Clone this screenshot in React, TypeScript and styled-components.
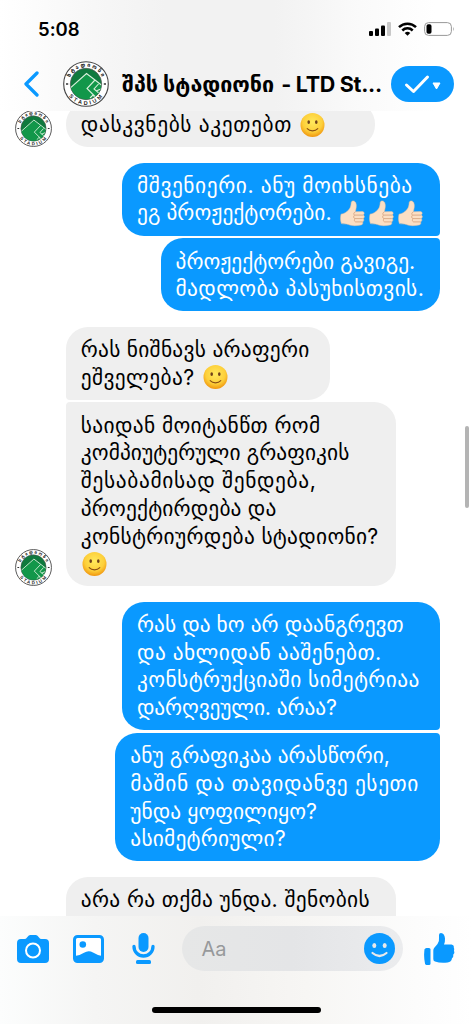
import React, { useLayoutEffect, useRef, useState } from "react";
import styled, { createGlobalStyle } from "styled-components";

const GlobalStyle = createGlobalStyle`
  * { box-sizing: border-box; }
  body { margin: 0; background: #fff; }
`;

const BLUE = "#0a99ff";

const Screen = styled.div`
  position: relative;
  width: 473px;
  height: 1024px;
  display: flex;
  flex-direction: column;
  overflow: hidden;
  background: #fff;
  font-family: "Inter", "DejaVu Sans", sans-serif;
`;

const Header = styled.header`
  flex: 0 0 111px;
  background: linear-gradient(90deg, #fff 0%, #f8f8f8 17%, #f2f2f2 35%, #f2f2f2 58%, #fafafa 76%, #fff 92%);
`;

const StatusBar = styled.div`
  height: 56px;
  padding: 19px 18px 0 38px;
  display: flex;
  align-items: flex-start;
  justify-content: space-between;
`;

const Clock = styled.div`
  font-size: 18.5px;
  line-height: 20px;
  font-weight: 600;
`;

const StatusIcons = styled.div`
  display: flex;
  gap: 7px;
  padding-top: 3px;
`;

const NavBar = styled.div`
  height: 55px;
  display: flex;
  align-items: center;
  padding: 0 19px 0 24px;
`;

const BackIcon = styled.svg`
  margin-right: 24px;
  flex: none;
`;

const Title = styled.h1`
  margin: 0 0 0 13px;
  flex: 1;
  display: flex;
  gap: 7px;
  font-size: 21.5px;
  line-height: 28px;
  font-weight: 700;
`;

const TitleLatin = styled.span`
  font-weight: 650;
`;

const Confirm = styled.button`
  width: 63px;
  height: 36px;
  border: 0;
  border-radius: 18px;
  padding: 0;
  background: ${BLUE};
  display: flex;
`;

const Thread = styled.main`
  flex: 1;
  overflow: hidden;
  display: flex;
  flex-direction: column;
`;

const Group = styled.section<{ $own?: boolean; $top: number }>`
  flex: none;
  margin-top: ${(p) => p.$top}px;
  padding-left: ${(p) => (p.$own ? 0 : 14.5)}px;
  padding-right: ${(p) => (p.$own ? 33 : 0)}px;
  display: flex;
  align-items: flex-end;
  justify-content: ${(p) => (p.$own ? "flex-end" : "flex-start")};
`;

const AvatarSlot = styled.div`
  flex: 0 0 51.3px;
  height: 37px;
`;

const Stack = styled.div<{ $own?: boolean }>`
  display: flex;
  flex-direction: column;
  gap: 2.8px;
  align-items: ${(p) => (p.$own ? "flex-end" : "flex-start")};
`;

const Bubble = styled.div<{ $own?: boolean; $w: number; $pos?: "first" | "last" }>`
  width: ${(p) => p.$w}px;
  padding: 9.2px 15px 8.3px;
  color: ${(p) => (p.$own ? "#fff" : "#000")};
  background: ${(p) => (p.$own ? BLUE : "#efefef")};
  border-radius: ${(p) => {
    const top = p.$pos === "last" ? 4 : 22;
    const bottom = p.$pos === "first" ? 4 : 22;
    return p.$own ? `22px ${top}px ${bottom}px 22px` : `${top}px 22px 22px ${bottom}px`;
  }};
`;

const Row = styled.div`
  height: 27.76px;
  display: flex;
  align-items: center;
  font-size: 21.4px;
  line-height: 27.76px;
`;

const Emojis = styled.span<{ $alone?: boolean }>`
  display: flex;
  gap: 4px;
  margin-left: ${(p) => (p.$alone ? 1.5 : 8)}px;
`;

const Run = styled.span`
  display: inline-block;
  white-space: pre;
`;

/* Tracks a run of text so that it spans the given width. */
function Fit({ text, w }: { text: string; w: number }) {
  const ref = useRef<HTMLSpanElement>(null);
  const [spacing, setSpacing] = useState(0);
  useLayoutEffect(() => {
    const el = ref.current!;
    el.style.letterSpacing = "0px";
    setSpacing((w + 0.7 - el.getBoundingClientRect().width) / text.length);
  }, [text, w]);
  return <Run ref={ref} style={{ letterSpacing: `${spacing}px` }}>{text}</Run>;
}

const Smile = () => (
  <svg width="25" height="25" viewBox="0 0 25 25" role="img" aria-label="smile">
    <defs>
      <radialGradient id="face" cx="50%" cy="38%" r="62%">
        <stop offset="0" stopColor="#ffe95c" />
        <stop offset=".65" stopColor="#fdcf3a" />
        <stop offset="1" stopColor="#f0960f" />
      </radialGradient>
    </defs>
    <circle cx="12.5" cy="12" r="12" fill="url(#face)" />
    <ellipse cx="8.7" cy="9.1" rx="1.3" ry="1.9" fill="#70421a" />
    <ellipse cx="16.3" cy="9.1" rx="1.3" ry="1.9" fill="#70421a" />
    <path d="M7.2 15.6c2.6 3 8 3 10.6 0" fill="none" stroke="#8a4f14" strokeWidth="1.1" strokeLinecap="round" />
  </svg>
);

const Thumb = () => (
  <svg width="25" height="27" viewBox="0 0 25 27" role="img" aria-label="thumbs up">
    <path d="M1 14.200C4 13.800 6.800 12 9 9.500C10.800 7.300 11 5 11.200 2.600C11.400.3 14.800.3 15.800 2.800C17 5.800 16 9 15.300 11.800L22.500 11.600C24.600 11.700 24.700 14.500 23 15C24.900 15.500 24.800 18.100 23 18.500C24.400 19.100 24.100 21.500 22.400 21.900C23.400 22.900 22.600 24.700 21 25C16.500 25.900 11.500 26 8.500 24.600C6 23.600 3 24.200 1.400 23.600C.3 20.500.3 17.300 1 14.200Z" fill="#fbdfc4" stroke="#eac19c" strokeWidth=".5" />
    <path d="M15.300 12c-1.600.5-2 2.200-.8 3.100h8.500M14.500 15.200c-1.300 1-1 2.800.3 3.400h8M15 18.700c-1 1-.8 2.700.6 3.200h6.800" fill="none" stroke="#d3a07b" strokeWidth=".8" />
  </svg>
);

const Crest = ({ size }: { size: number }) => (
  <svg width={size} height={size} viewBox="0 0 46 46" role="img" aria-label="stadium crest">
    <defs>
      <path id="arcTop" d="M5.700 23a17.300 17.300 0 0 1 34.600 0" />
      <path id="arcBottom" d="M2.200 23a20.800 20.800 0 0 0 41.600 0" />
      <clipPath id="disc"><circle cx="23" cy="23" r="15.300" /></clipPath>
    </defs>
    <circle cx="23" cy="23" r="22.300" fill="#fff" stroke="#444" strokeWidth="1.100" />
    <circle cx="23" cy="23" r="15.700" fill="#0f7a3e" stroke="#555" strokeWidth=".7" />
    <g clipPath="url(#disc)">
      <path d="M5 29L23.500 12.500 38 24v18H8z" fill="#12974a" />
      <path d="M5 29L23.500 12.500l8.500 6.500M32 19l-8 8.500 8 8M32 19l7 5.500M35.500 23l-4.500 5 6 5M33 30l5-2M27 37l3-3 4 5" fill="none" stroke="#d9f0dc" strokeWidth="1.100" />
    </g>
    <text fontFamily="DejaVu Sans" fontSize="5.500" fontWeight="700" fill="#222" letterSpacing="1.700"><textPath href="#arcTop" startOffset="51%" textAnchor="middle">სტადიონი</textPath></text>
    <text fontFamily="Liberation Sans" fontSize="5.500" fontWeight="700" fill="#222" letterSpacing="2.300"><textPath href="#arcBottom" startOffset="51%" textAnchor="middle">STADIUM</textPath></text>
    <path d="M3 23h2.200M40.800 23h2.200" stroke="#333" strokeWidth="1.500" />
  </svg>
);

const Composer = styled.footer`
  flex: 0 0 108.5px;
  display: flex;
  flex-direction: column;
  align-items: center;
  background: linear-gradient(90deg, #fcfdfd 0%, #f5f5f4 20%, #f1f0ee 42%, #f7f6f4 65%, #fcfcfc 88%, #fff 100%);
`;

const Tools = styled.div`
  align-self: stretch;
  height: 66px;
  padding: 0 17px;
  display: flex;
  align-items: center;
`;

const ToolIcon = styled.svg<{ $gap: number }>`
  flex: none;
  margin-right: ${(p) => p.$gap}px;
`;

const Input = styled.div`
  width: 221px;
  height: 45px;
  margin-right: 21.5px;
  padding: 0 8px 0 20px;
  border-radius: 23px;
  background: linear-gradient(90deg, #e6e7e7, #e4e5e7 50%, #ebecee);
  color: #97999b;
  font-size: 20px;
  display: flex;
  align-items: center;
  justify-content: space-between;
`;

const HomeIndicator = styled.div`
  width: 169px;
  height: 6px;
  margin-top: 25.5px;
  border-radius: 3px;
  background: #000;
`;

const ScrollThumb = styled.div`
  position: absolute;
  right: 4px;
  top: 426px;
  width: 4px;
  height: 82px;
  border-radius: 2px;
  background: #b4b4b4;
`;

type Line = { t?: string; w?: number; emoji?: React.ReactNode };

const Message = ({ lines, ...rest }: { lines: Line[]; $w: number; $own?: boolean; $pos?: "first" | "last" }) => (
  <Bubble {...rest}>
    {lines.map((l, i) => (
      <Row key={i}>
        {l.t && <Fit text={l.t} w={l.w!} />}
        {l.emoji && <Emojis $alone={!l.t}>{l.emoji}</Emojis>}
      </Row>
    ))}
  </Bubble>
);

export default function App() {
  return (
    <Screen>
      <GlobalStyle />
      <Header>
        <StatusBar>
          <Clock><Fit text="5:08" w={41} /></Clock>
          <StatusIcons>
            <svg width="22" height="14" viewBox="0 0 22 14">
              <rect x="0" y="9" width="4" height="5" rx="1" />
              <rect x="6" y="6.5" width="4" height="7.5" rx="1" />
              <rect x="12" y="3.5" width="4" height="10.5" rx="1" />
              <rect x="18" y="0" width="4" height="14" rx="1" fill="#c8c8c8" />
            </svg>
            <svg width="19" height="14" viewBox="0 0 19 14" fill="none" stroke="#000" strokeWidth="2.5">
              <path d="M1 5.1a12.200 12.200 0 0 1 17 0M4.300 8.500a7.400 7.400 0 0 1 10.400 0" />
              <path d="M6.700 10.900a4.200 4.200 0 0 1 5.600 0L9.500 13.700z" fill="#000" stroke="none" />
            </svg>
            <svg width="31" height="14" viewBox="0 0 31 14">
              <rect x=".6" y=".6" width="26.800" height="12.800" rx="4" fill="none" stroke="#999" />
              <rect x="2.500" y="2.300" width="5" height="9.400" rx="1.800" />
              <path d="M29 4.800q1.500 2.200 0 4.400z" fill="#999" />
            </svg>
          </StatusIcons>
        </StatusBar>
        <NavBar>
          <BackIcon width="15" height="26" viewBox="0 0 15 26" fill="none" stroke={BLUE} strokeWidth="3.300" strokeLinecap="round" strokeLinejoin="round"><path d="M13 2L2 13l11 11" /></BackIcon>
          <Crest size={46} />
          <Title><Fit text="შპს სტადიონი" w={151.5} /><TitleLatin><Fit text="- LTD St..." w={100} /></TitleLatin></Title>
          <Confirm aria-label="confirm">
            <svg width="63" height="36" viewBox="0 0 63 36"><path d="M15.500 19l7 6.500L36.500 11" fill="none" stroke="#fff" strokeWidth="3" strokeLinecap="round" strokeLinejoin="round" /><path d="M42 17h7l-3.500 6z" fill="#fff" stroke="#fff" strokeLinejoin="round" /></svg>
          </Confirm>
        </NavBar>
      </Header>
      <Thread>
        <Group $top={-9}>
          <AvatarSlot><Crest size={37} /></AvatarSlot>
          <Message $w={309.5} lines={[{ t: "დასკვნებს აკეთებთ", w: 210.5, emoji: <Smile /> }]} />
        </Group>
        <Group $own $top={15.3}>
          <Stack $own>
            <Message $own $pos="first" $w={318} lines={[{ t: "მშვენიერი. ანუ მოიხსნება", w: 275 }, { t: "ეგ პროჟექტორები.", w: 194, emoji: <><Thumb /><Thumb /><Thumb /></> }]} />
            <Message $own $pos="last" $w={279.5} lines={[{ t: "პროჟექტორები გავიგე.", w: 239 }, { t: "მადლობა პასუხისთვის.", w: 248 }]} />
          </Stack>
        </Group>
        <Group $top={15.3}>
          <AvatarSlot><Crest size={37} /></AvatarSlot>
          <Stack>
            <Message $pos="first" $w={264} lines={[{ t: "რას ნიშნავს არაფერი", w: 228 }, { t: "ეშველება?", w: 113, emoji: <Smile /> }]} />
            <Message $pos="last" $w={330.7} lines={[
              { t: "საიდან მოიტანწთ რომ", w: 239 },
              { t: "კომპიუტერული გრაფიკის", w: 268 },
              { t: "შესაბამისად შენდება,", w: 235 },
              { t: "პროექტირდება და", w: 195 },
              { t: "კონსტრიურდება სტადიონი?", w: 297 },
              { emoji: <Smile /> },
            ]} />
          </Stack>
        </Group>
        <Group $own $top={15.3}>
          <Stack $own>
            <Message $own $pos="first" $w={318} lines={[
              { t: "რას და ხო არ დაანგრევთ", w: 266 },
              { t: "და ახლიდან ააშენებთ.", w: 244 },
              { t: "კონსტრუქციაში სიმეტრიაა", w: 282 },
              { t: "დარღვეული. არაა?", w: 199 },
            ]} />
            <Message $own $pos="last" $w={324.7} lines={[
              { t: "ანუ გრაფიკაა არასწორი,", w: 259 },
              { t: "მაშინ და თავიდანვე ესეთი", w: 288 },
              { t: "უნდა ყოფილიყო?", w: 186 },
              { t: "ასიმეტრიული?", w: 155 },
            ]} />
          </Stack>
        </Group>
        <Group $top={15.3}>
          <AvatarSlot />
          <Message $w={330.7} lines={[{ t: "არა რა თქმა უნდა. შენობის", w: 288.5 }, {}]} />
        </Group>
      </Thread>
      <Composer>
        <Tools>
          <ToolIcon $gap={24} width="32" height="28" viewBox="0 0 32 28"><path d="M4 4h3.500q1.500 0 2.500-1.500Q11.500 0 13 0h6q1.500 0 3 2.500Q23 4 24.500 4H28q4 0 4 4v16q0 4-4 4H4q-4 0-4-4V8q0-4 4-4z" fill={BLUE} /><circle cx="16" cy="15.500" r="7" fill="none" stroke="#fff" strokeWidth="2" /></ToolIcon>
          <ToolIcon $gap={28} width="31" height="28" viewBox="0 0 31 28"><rect x="1.500" y="1.500" width="28" height="25" rx="3" fill="#fff" stroke={BLUE} strokeWidth="3" /><circle cx="9.800" cy="9.500" r="3.300" fill={BLUE} /><path d="M2 21q5-.5 9-3.200 4.500-3 9-.3 5 3 9 3.500v5.500H2z" fill={BLUE} /></ToolIcon>
          <ToolIcon $gap={26.5} width="23" height="31" viewBox="0 0 23 31"><rect x="6.500" width="10" height="19" rx="5" fill={BLUE} /><path d="M2 13.500a9.500 9.500 0 0 0 19 0" fill="none" stroke={BLUE} strokeWidth="3.300" strokeLinecap="round" /><rect x="4" y="27" width="15" height="4" rx="1.500" fill={BLUE} /></ToolIcon>
          <Input>
            Aa
            <svg width="31" height="31" viewBox="0 0 31 31"><circle cx="15.500" cy="15.500" r="15.500" fill={BLUE} /><ellipse cx="10.300" cy="12.500" rx="2" ry="2.600" fill="#e8e9eb" /><ellipse cx="20.700" cy="12.500" rx="2" ry="2.600" fill="#e8e9eb" /><path d="M8.500 20q7 6 14 0" fill="none" stroke="#e8e9eb" strokeWidth="2.200" strokeLinecap="round" /></svg>
          </Input>
          <ToolIcon $gap={0} width="31" height="32" viewBox="0 0 31 32" fill={BLUE}><path d="M2.500 15H5q1.500 0 1.500 1.500v14Q6.500 32 5 32H2.500q-1 0-1.500-1.500Q-.5 23.500.5 16.500 1 15 2.500 15z" /><path d="M9.300 17.500q0-1.500 1-2.800L13.500 11q2-2.500 1.500-6V2q0-2 2-2 3.500.3 4 5.500.2 3-1 6h7.500q2.700.5 2.300 3 .8 1.500.2 3 1 2-.7 4 .4 2.500-1.300 3.800-.5 3.700-4.500 4.200-7 1-12.500-1-1.700-.5-1.700-2.500z" /></ToolIcon>
        </Tools>
        <HomeIndicator />
      </Composer>
      <ScrollThumb />
    </Screen>
  );
}
